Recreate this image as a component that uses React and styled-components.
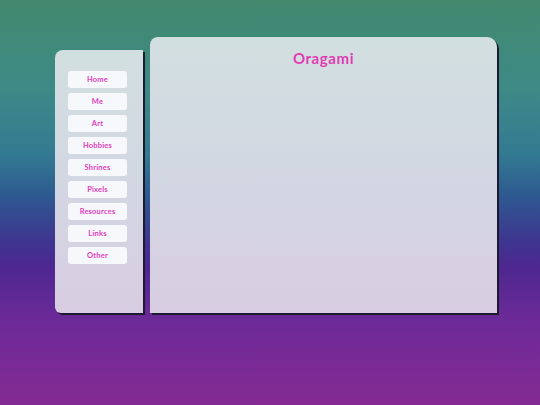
import React from 'react';
import styled, { createGlobalStyle } from 'styled-components';

const GlobalStyle = createGlobalStyle`
  html, body {
    margin: 0;
    padding: 0;
    height: 100%;
  }
  #root {
    height: 100%;
  }
`;

const Page = styled.div`
  height: 405px;
  box-sizing: border-box;
  padding: 37px 0 0 55px;
  display: flex;
  align-items: flex-start;
  gap: 7px;
  font-family: 'Comic Sans MS', 'Lato', 'DejaVu Sans', sans-serif;
  background: linear-gradient(
    to bottom,
    #43896e 0%,
    #3d8a86 22%,
    #347a92 38%,
    #2d5a90 48%,
    #3f3490 60%,
    #4e2790 66%,
    #6e2a98 80%,
    #842a92 100%
  );
`;

const Sidebar = styled.nav`
  margin-top: 13px;
  width: 88px;
  height: 263px;
  box-sizing: border-box;
  padding: 21px 0 0 13px;
  display: flex;
  flex-direction: column;
  gap: 5px;
  border-radius: 8px 0 0 6px;
  background: linear-gradient(to bottom, #d2dfe0 0%, #d2d8e2 45%, #d8cde2 100%);
  box-shadow: 2px 2px 0 #1c1a2c;
`;

const NavButton = styled.a`
  width: 59px;
  height: 17px;
  display: flex;
  align-items: center;
  justify-content: center;
  border-radius: 3px;
  background: #f7f8fb;
  color: #e03cbd;
  font-size: 7.5px;
  font-weight: 700;
  text-decoration: none;
  letter-spacing: 0.2px;
`;

const Main = styled.main`
  width: 347px;
  height: 276px;
  box-sizing: border-box;
  padding-top: 12px;
  border-radius: 8px 10px 0 0;
  background: linear-gradient(to bottom, #d2dfe0 0%, #d2d8e2 45%, #d8cde2 100%);
  box-shadow: 2px 2px 0 #1c1a2c;
`;

const Title = styled.h1`
  margin: 0;
  text-align: center;
  color: #e03cb4;
  font-size: 15px;
  font-weight: 700;
  letter-spacing: 0.6px;
`;

const links = ['Home', 'Me', 'Art', 'Hobbies', 'Shrines', 'Pixels', 'Resources', 'Links', 'Other'];

const App = () => (
  <>
    <GlobalStyle />
    <Page>
      <Sidebar>
        {links.map((label) => (
          <NavButton key={label} href="#">
            {label}
          </NavButton>
        ))}
      </Sidebar>
      <Main>
        <Title>Oragami</Title>
      </Main>
    </Page>
  </>
);

export default App;
